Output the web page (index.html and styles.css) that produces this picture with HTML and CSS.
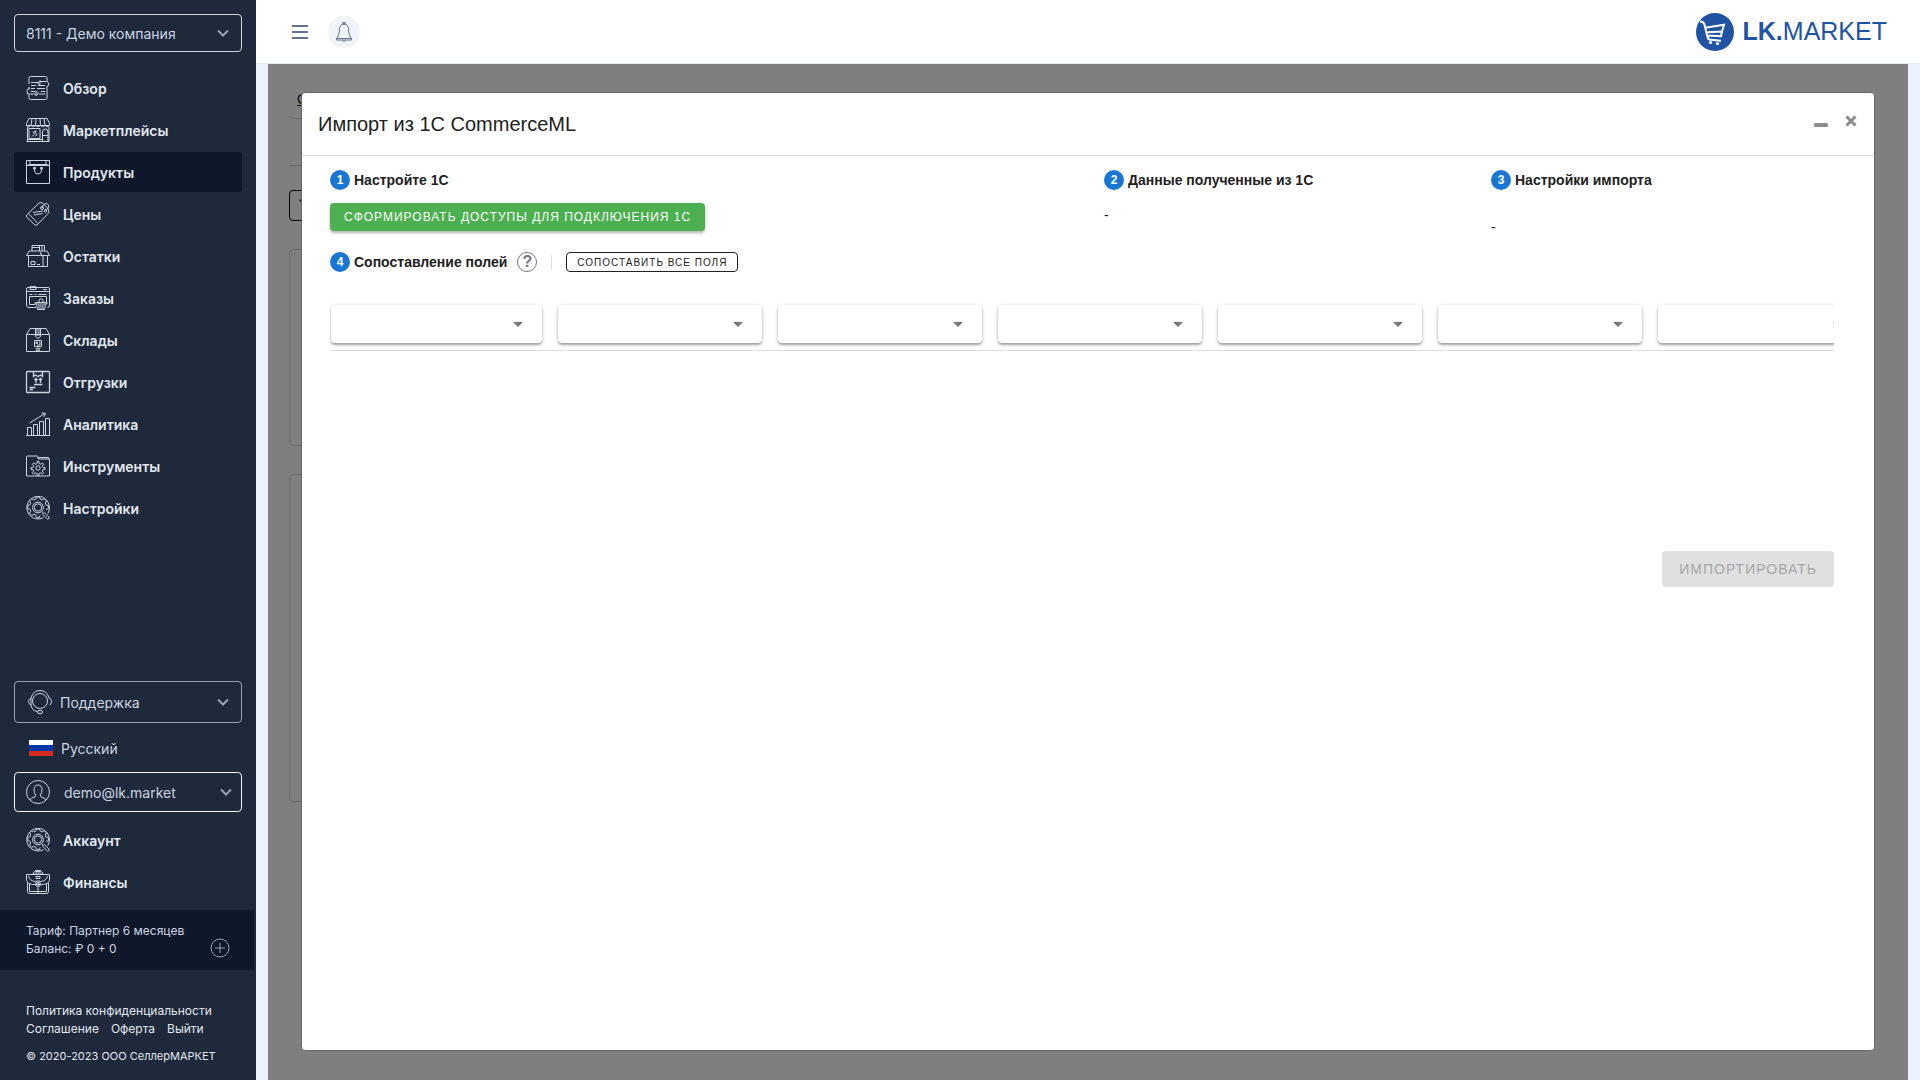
FILE: index.html
```html
<!DOCTYPE html>
<html lang="ru">
<head>
<meta charset="utf-8">
<title>LK.MARKET</title>
<link rel="stylesheet" href="styles.css">
</head>
<body>
<svg class="sprite" aria-hidden="true">
  <symbol id="chevron" viewBox="0 0 12 8"><path d="M1 1.500l5 5 5-5" fill="none" stroke="currentColor" stroke-width="2"/></symbol>
  <symbol id="gear-search" viewBox="0 0 24 24">
    <path d="M17.500 21.600A11.300 11.300 0 1 1 21.800 17.500"/>
    <path d="M14 19.400l-.4 2h-3.200l-.6-2.300-2-.8-2 1.200-2.300-2.300 1.200-2-.8-2-2.200-.6V9.400l2.200-.6.8-2-1.200-2L5.800 2.700l2 1.200 2-.8.6-2h3.200l.6 2 2 .8 2-1.200 2.300 2.300-1.200 2 .8 2 2.300.6v3.200l-2.300.6"/>
    <circle cx="12" cy="11.500" r="5.400"/><circle cx="12" cy="11.500" r="3.700"/>
    <path d="M15.500 15.500l1.500 1.200M16.500 18.200l1.700-1.700 5 4.800q.6 1.600-1.700 1.800z"/>
  </symbol>
</svg>
<div class="app">
  <aside class="sidebar">
    <button class="picker company" type="button"><span>8111 - Демо компания</span><svg class="chev"><use href="#chevron"/></svg></button>
    <nav class="menu">
      <a href="#"><svg class="ico" viewBox="0 0 24 24"><path d="M3 8V2q0-1.500 1.500-1.500h15Q21 .500 21 2v3M21 10v12q0 1.500-1.500 1.500h-15Q3 23.500 3 22v-3M3 11v3M5 6.500h7M5 9.500h5m2 0h7M5 12.500h4m2 0h8M5 15.500h4m6 0h4M13 18h6M3 18H1.500Q-.5 14 3.500 11.500M14 5.500h7.500q3 2 0 5.500M14 4.500v4l-2.500-1zM10 15v5l2.500-2.500zM3 18h7"/></svg>Обзор</a>
      <a href="#"><svg class="ico" viewBox="0 0 24 24"><path d="M3 .500h18l2.500 5v2H.500v-2zM6 .500l-1 7M10 .500L9.500 8M14 .500l.5 7.500M18 .500l1 7M.500 7.500q2.300 2.500 4.600 0 2.300 2.500 4.600 0 2.300 2.500 4.600 0 2.300 2.500 4.600 0 2.300 2.500 4.600 0M1.500 9v14M23 9v14M.500 23.500h23M2 21.500h14M3 10.500h11v10H3zM16.500 23v-9q0-3 2.800-3t2.700 3v9M16.500 17.500H22M6 18.500l2-2M7 15q0-2 3-2 0 3-2.500 3M9 18q2 0 2-2.500"/></svg>Маркетплейсы</a>
      <a class="active" href="#"><svg class="ico" viewBox="0 0 24 24"><path d="M.500.500h23v23H.500zM.500 5.500h23M3.500 4.500h17M4 .500v4L1 5.500M20 .500v4l3 1M8.500 8.500h.1v2.500q.4 3 3.400 3t3.400-3V8.500M7.500 7.500h2v1.500h-2zM14.500 7.500h2v1.500h-2z"/></svg>Продукты</a>
      <a href="#"><svg class="ico" viewBox="0 0 24 24"><path d="M.7 13L13 1l3-.5 6 6 1 4-12 12.500q-1 .8-2 0l-8.300-8q-.7-1 0-2zM2.500 11.500l9 9.500M7 10.500l10-1.500M8 13l8.500-1.500"/><circle cx="16" cy="6" r="1.500"/><circle cx="19.500" cy="9" r="1.200"/><path d="M16 6q.5-4 4-4.500 3.500.5 2.500 4-1 2.500-3.500 2"/></svg>Цены</a>
      <a href="#"><svg class="ico" viewBox="0 0 24 24"><path d="M2.500 12v10.500h19V12M3 7h18l2.500 4.500H16L14.500 8.500 16 12.500M3 7L.500 11.500h15M6 7V1.500h12.500V7M6 3.500h7M13.500 1.500V7M16 1.500V7M17 12v10.500M5 17.500h4v3H5zM11 20.500h3"/></svg>Остатки</a>
      <a href="#"><svg class="ico" viewBox="0 0 24 24"><path d="M10 21.500H3Q.500 21.500.500 19V3Q.500 1.500 2 1.500h20q1.500 0 1.500 1.500v16q0 2.500-2 2.500M.500 5.500h23M4 1.500v-1h6v3H4zM17 3.500h4M3.500 8.500h3m2 0h2m2 0h8M9 18.500H3.500v-8h17v6M9 16.500h12v1.500H9zM10.500 18.500l1 5h7l1-5M13 19v4M15 19v4M17 19v4M13 16v-2q2-3 4 0v2"/></svg>Заказы</a>
      <a href="#"><svg class="ico" viewBox="0 0 24 24"><path d="M.500 6.500L4 .500h16l3.500 6v17H.500zM.500 6.500h23M9.500 .500v8l2.500 2 2.500-2v-8M11 1v7M13 1v7M8.500 12.500h7v6h-7zM10 14h1.500v1.500H10zM13 14h1v3h-3M12 19.500l.6 1.200h1.500l-1 1 .4 1.600-1.500-.8-1.500.8.4-1.600-1-1h1.500z"/></svg>Склады</a>
      <a href="#"><svg class="ico" viewBox="0 0 24 24"><path stroke-width="1.300" d="M1.500 1.500h21q1 0 1 1v19q0 1-1 1h-21q-1 0-1-1v-19q0-1 1-1zM7.500 2v4.500l2-1.500 2.500 1.500 2.500-1.500 2 1.500V2M8 14.500h8.500M10 13V8.500M8.500 10L10 8.500l1.500 1.500M14.500 13V8.500M13 10l1.500-1.500L16 10M3.500 17.500h6M3.500 19.500H7"/></svg>Отгрузки</a>
      <a href="#"><svg class="ico" viewBox="0 0 24 24"><path d="M0 23.500h24M1.500 23v-7.500h4V23M7.500 23V12.500h4V23M13.500 23V9.500h4V23M19.500 23V6.500h4V23M3.500 11l15.500-9.500M15.500 1l4 .3-1.500 3.500"/></svg>Аналитика</a>
      <a href="#"><svg class="ico" viewBox="0 0 24 24"><path d="M.500 22V3q0-1 1-1H11q1 0 1 1v2h11.500v17zM12 3.500h10.500V5"/><path d="M11 7.500h2v2l1.800.8 1.500-1.400 1.400 1.400-1.400 1.500.7 1.700H19v2h-2l-.7 1.700 1.400 1.500-1.400 1.400-1.500-1.400-1.800.8v2h-2v-2l-1.800-.8-1.500 1.400-1.400-1.400 1.400-1.500-.7-1.700H5v-2h2l.7-1.700-1.400-1.500 1.400-1.400 1.500 1.400 1.800-.8z"/><circle cx="12" cy="14" r="2.200"/></svg>Инструменты</a>
      <a href="#"><svg class="ico"><use href="#gear-search"/></svg>Настройки</a>
    </nav>
    <button class="picker support" type="button"><svg class="ico" viewBox="0 0 24 24"><circle cx="12" cy="11" r="7.500"/><path d="M3 8Q5 .500 12 .500T21 8M3 15q-2.500-1-2.500-3.500T3 8M21 8q2.500.500 2.500 3.500T21.500 15M3 8v7q1 6 6.500 6.500"/><rect x="9.500" y="20.500" width="5" height="3" rx="1.500"/></svg><span>Поддержка</span><svg class="chev"><use href="#chevron"/></svg></button>
    <a class="language" href="#"><svg viewBox="0 0 24 16"><path fill="#fff" d="M0 0h24v6H0z"/><path fill="#0039a6" d="M0 5h24v6H0z"/><path fill="#d52b1e" d="M0 11h24v5H0z"/></svg>Русский</a>
    <button class="picker user" type="button"><svg class="ico" viewBox="0 0 24 24"><circle cx="12" cy="12" r="11.500"/><path d="M4 20q1-2 5-3.200 1-.5.5-2Q8 13 8 9.500 8 5 12 5t4 4.500q0 3.500-1.500 5.300-.5 1.500.5 2 4 1.200 5 3.200"/></svg><span>demo@lk.market</span><svg class="chev"><use href="#chevron"/></svg></button>
    <nav class="menu">
      <a href="#"><svg class="ico"><use href="#gear-search"/></svg>Аккаунт</a>
      <a href="#"><svg class="ico" viewBox="0 0 24 24"><path d="M.500 4.500h23v6q-1 3.500-6 4h-11q-5-.5-6-4zM1.500 13v8.500q0 2 2 2h17q2 0 2-2V13M3.500 14v7.500h17V14M7 4.500q0-3 2.500-3h5q2.500 0 2.500 3M9 4.500q0-1.500 1-1.500h4q1 0 1 1.500M9 .500h6M2.500 6q1 5 7 5.500M21.500 6q-1 5-7 5.500M10 11h4v5h-4zM11 12.500h2v2h-2zM12 16v7M10 6.500h4v2h-4z"/></svg>Финансы</a>
    </nav>
    <section class="tariff">
      <div>Тариф: Партнер 6 месяцев<br>Баланс: ₽ 0 + 0</div>
      <button type="button" aria-label="Пополнить баланс"><svg viewBox="0 0 20 20"><circle cx="10" cy="10" r="9"/><path d="M10 5v10M5 10h10"/></svg></button>
    </section>
    <footer class="legal">
      <a href="#">Политика конфиденциальности</a>
      <div class="legal-row"><a href="#">Соглашение</a><a href="#">Оферта</a><a href="#">Выйти</a></div>
      <p>© 2020-2023 ООО СеллерМАРКЕТ</p>
    </footer>
  </aside>
  <div class="main">
    <header class="topbar">
      <button class="burger" type="button" aria-label="Меню"><svg viewBox="0 0 16 14"><path d="M0 0h16v2H0zM0 6h16v2H0zM0 12h16v2H0z" fill="currentColor"/></svg></button>
      <button class="bell" type="button" aria-label="Уведомления"><svg viewBox="0 0 16 20"><path fill="none" stroke="currentColor" d="M8 1.500q4.500 1 4.500 6 0 4.500 2.500 9H1q2.500-4.500 2.500-9 0-5 4.500-6zM.500 16.500h15v1.500H.500zM7 0h2v2.500H7zM6.500 18.500q1.500 2 3 0"/></svg></button>
      <a class="logo" href="#"><svg viewBox="0 0 38 38"><circle cx="19" cy="19" r="19" fill="#2053a1"/><path d="M4 8.500q4 .3 4.500 3L11.500 24q.5 2.500 3 2.700l10.500 1M9 14.800l19-3-2 6.700-14.500.8M26 18.500l-1 4.700-13.500-.7" fill="none" stroke="#fff" stroke-width="2"/><circle cx="14.500" cy="29.500" r="1.600" fill="#fff"/><circle cx="21.500" cy="30.500" r="1.600" fill="#fff"/></svg><span><b>LK.</b>MARKET</span></a>
    </header>
    <div class="stage">
      <div class="page" aria-hidden="true">
        <div class="tabs"><span>Обзор</span></div>
        <div class="rule"></div>
        <div class="filter"><svg viewBox="0 0 18 18"><path d="M1 2h16l-6 7v7l-4-2V9z"/></svg></div>
        <div class="panel panel-short"></div>
        <div class="panel panel-tall"></div>
      </div>
      <div class="overlay">
        <section class="dialog" role="dialog" aria-labelledby="dialog-title">
          <header class="dialog-head">
            <h1 id="dialog-title">Импорт из 1С CommerceML</h1>
            <button type="button" aria-label="Свернуть"><svg viewBox="0 0 14 14"><rect y="9" width="14" height="4" rx="1.500" fill="currentColor"/></svg></button>
            <button type="button" aria-label="Закрыть"><svg viewBox="0 0 14 14"><path d="M2.500 2.500l9 9m0-9l-9 9" stroke="currentColor" stroke-width="3"/></svg></button>
          </header>
          <div class="steps">
            <section><h2><span class="num">1</span>Настройте 1С</h2><button class="btn-green" type="button">Сформировать доступы для подключения 1С</button></section>
            <section><h2><span class="num">2</span>Данные полученные из 1С</h2><p>-</p></section>
            <section><h2><span class="num">3</span>Настройки импорта</h2><p class="late">-</p></section>
          </div>
          <div class="mapping">
            <div class="mapping-head">
              <h2><span class="num">4</span>Сопоставление полей</h2>
              <button class="help" type="button" aria-label="Справка">?</button>
              <span class="divider"></span>
              <button class="btn-outline" type="button">Сопоставить все поля</button>
            </div>
            <div class="fields">
              <label class="field"><select aria-label="Поле 1"><option></option></select></label>
              <label class="field"><select aria-label="Поле 2"><option></option></select></label>
              <label class="field"><select aria-label="Поле 3"><option></option></select></label>
              <label class="field"><select aria-label="Поле 4"><option></option></select></label>
              <label class="field"><select aria-label="Поле 5"><option></option></select></label>
              <label class="field"><select aria-label="Поле 6"><option></option></select></label>
              <label class="field"><select aria-label="Поле 7"><option></option></select></label>
            </div>
            <div class="actions"><button class="btn-import" type="button" disabled>Импортировать</button></div>
          </div>
        </section>
      </div>
    </div>
  </div>
</div>
</body>
</html>
```
FILE: styles.css
```css
* { box-sizing: border-box; }
body { margin: 0; font-family: "Liberation Sans", Arial, sans-serif; color: #212121; }
button { font: inherit; color: inherit; background: none; border: 0; padding: 0; cursor: pointer; }
a { color: inherit; text-decoration: none; }
h1, h2, p { margin: 0; }
svg { display: block; flex: none; }
.sprite { position: absolute; width: 0; height: 0; }
.app { display: flex; min-height: 100vh; background: #eef2ff; }

/* Sidebar */
.sidebar { width: 256px; flex: none; display: flex; flex-direction: column; padding-top: 14px; background: #1e293b; color: #e2e8f0; font-family: Inter, sans-serif; font-size: 14px; }
.picker { display: flex; align-items: center; margin: 0 14px; border: 1px solid #94a3b8; border-radius: 4px; color: #cbd5e1; text-align: left; }
.picker span { flex: 1; }
.chev { width: 12px; height: 8px; color: #94a3b8; }
.company { height: 38px; padding: 0 12px 0 11px; border-color: #d4d4d4; }
.support { height: 42px; padding: 0 12px 0 13px; gap: 8px; margin-top: auto; }
.user { height: 40px; padding: 0 9px 0 11px; gap: 14px; border-color: #f1f5f9; }
.ico { width: 24px; height: 24px; fill: none; stroke: #cbd5e1; stroke-width: 1; overflow: visible; }
.menu { display: flex; flex-direction: column; gap: 2px; margin: 16px 14px 0; }
.menu a { display: flex; align-items: center; gap: 13px; height: 40px; padding-left: 12px; border-radius: 3px; font-weight: 600; }
.menu a.active { background: #0f172a; }
.user + .menu { margin-top: 8px; }
.language { display: flex; align-items: center; gap: 8px; height: 49px; padding: 1px 0 0 29px; color: #cbd5e1; }
.language svg { width: 24px; height: 16px; }
.tariff { display: flex; align-items: flex-end; justify-content: space-between; height: 60px; margin: 8px 2px 0 0; padding: 12px 24px 12px 26px; background: #0f172a; font-size: 12px; line-height: 18px; color: #cbd5e1; }
.tariff svg { width: 20px; height: 20px; fill: none; stroke: #94a3b8; }
.legal { padding: 32px 26px 15px; font-size: 12px; line-height: 18px; color: #e2e8f0; }
.legal-row { display: flex; gap: 12px; }
.legal p { margin-top: 9px; font-size: 11px; }

/* Top bar */
.main { flex: 1; min-width: 0; display: flex; flex-direction: column; }
.topbar { display: flex; align-items: center; height: 64px; padding: 0 33px 0 36px; background: #fff; border-bottom: 1px solid #e2e8f0; }
.burger { color: #64748b; }
.burger svg { width: 16px; height: 14px; }
.bell { display: grid; place-items: center; width: 32px; height: 32px; margin-left: 20px; border-radius: 50%; background: #f1f5f9; color: #64748b; }
.bell svg { width: 16px; height: 20px; }
.logo { display: flex; align-items: center; gap: 9px; margin-left: auto; font-size: 25px; color: #2053a1; }
.logo svg { width: 38px; height: 38px; }

/* Page under the dialog */
.stage { position: relative; flex: 1; margin: 0 12px; background: #fff; }
.page { padding: 21px 40px 21px 21px; }
.tabs { height: 34px; padding: 4px 8px; border-bottom: 1px solid #d4d4d4; border-radius: 0 0 0 4px; font-size: 14px; line-height: 20px; text-decoration: underline; }
.rule { margin-top: 46px; border-top: 1px solid #d4d4d4; }
.filter { width: 90px; height: 31px; margin-top: 24px; padding: 7px; border: 1px solid #000; border-radius: 4px; }
.filter svg { width: 18px; height: 16px; }
.panel { margin-top: 28px; border: 1px solid #d4d4d4; border-radius: 4px; }
.panel-short { height: 197px; }
.panel-tall { height: 328px; }
.overlay { position: absolute; inset: 0; display: flex; padding: 28px 33px 29px; background: rgba(0, 0, 0, .5); }

/* Dialog */
.dialog { flex: 1; min-width: 0; border: 1px solid #666; border-radius: 4px; background: #fff; }
.dialog-head { display: flex; align-items: center; height: 63px; padding: 0 16px; border-bottom: 1px solid #dedede; }
.dialog-head h1 { flex: 1; font-size: 20px; font-weight: 400; }
.dialog-head button { margin-left: 16px; color: #8c8c8c; }
.dialog-head svg { width: 14px; height: 14px; margin-bottom: 6px; }
.steps { display: grid; grid-template-columns: 2fr 1fr 1fr; padding: 13px 8px 0 16px; }
.steps section { padding: 0 12px; }
h2 { display: flex; align-items: center; gap: 4px; font-size: 14px; line-height: 22px; }
.num { display: grid; place-items: center; width: 20px; height: 20px; border-radius: 50%; background: #1976d2; color: #fff; font-size: 12px; line-height: 20px; }
.steps p { padding-top: 14px; font-size: 14px; line-height: 20px; }
.steps .late { padding-top: 26px; }
.btn-green, .btn-outline, .btn-import { text-transform: uppercase; letter-spacing: 1px; border-radius: 4px; }
.btn-green { height: 28px; margin-top: 12px; padding: 0 14px; background: #4caf50; color: #fff; font-size: 12px; box-shadow: 0 2px 3px rgba(0, 0, 0, .3); }
.mapping { padding: 14px 40px 0 28px; }
.mapping-head { display: flex; align-items: center; }
.help { width: 20px; height: 20px; margin-left: 10px; border: 1px solid #757575; border-radius: 50%; color: #757575; font-size: 16px; font-weight: 700; line-height: 18px; }
.divider { width: 1px; height: 14px; margin: 0 14px; background: #dedede; }
.btn-outline { height: 20px; padding: 0 10px; border: 1px solid #212121; font-size: 10px; }
.fields { display: flex; gap: 16px; padding: 32px 0 7px 1px; border-bottom: 1px solid #dedede; overflow: hidden; }
.field { position: relative; flex: none; width: 204px; }
.field:first-child { width: 211px; }
.field::after { content: ""; position: absolute; top: 17px; right: 19px; border: 5px solid transparent; border-top-color: #757575; border-bottom: 0; pointer-events: none; }
.field select { display: block; width: 100%; height: 38px; appearance: none; border: 0; border-radius: 4px; background: #fff; box-shadow: 0 1px 4px rgba(0, 0, 0, .2), 0 2px 2px rgba(0, 0, 0, .25); }
.actions { display: flex; justify-content: flex-end; padding-top: 200px; }
.btn-import { height: 36px; padding: 0 17px; background: #e0e0e0; color: #a6a6a6; font-size: 14px; }
```
